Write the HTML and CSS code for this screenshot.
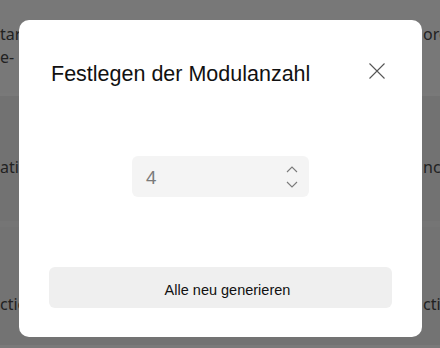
FILE: index.html
```html
<!DOCTYPE html>
<html lang="de">
<head>
<meta charset="utf-8">
<title>Festlegen der Modulanzahl</title>
<link rel="stylesheet" href="styles.css">
</head>
<body>
<div class="page">
  <div class="row row-1">
    <div class="cell-left">
      <div class="line">tar</div>
      <div class="line">e-</div>
    </div>
    <div class="cell-right">
      <div class="line">ore</div>
    </div>
  </div>
  <div class="row row-2">
    <div class="cell-left"><div class="line">atio</div></div>
    <div class="cell-right"><div class="line">nc</div></div>
  </div>
  <div class="row row-3">
    <div class="cell-left"><div class="line">ctio</div></div>
    <div class="cell-right"><div class="line">cti</div></div>
  </div>
</div>
<div class="overlay"></div>
<div class="dialog" role="dialog" aria-labelledby="dlg-title">
  <div class="dialog-header">
    <h1 class="dialog-title" id="dlg-title">Festlegen der Modulanzahl</h1>
    <button class="close-btn" aria-label="Schließen">
      <svg width="16" height="16" viewBox="0 0 16 16"><path d="M0.5 0.5 L15.5 15.5 M15.5 0.5 L0.5 15.5" stroke="#555" stroke-width="1.1" fill="none"/></svg>
    </button>
  </div>
  <div class="dialog-body">
    <div class="spin">
      <span class="spin-value">4</span>
      <span class="spin-arrows">
        <svg width="12" height="7" viewBox="0 0 12 7"><path d="M1 6 L6 1 L11 6" stroke="#7a7a7a" stroke-width="1.1" fill="none"/></svg>
        <svg width="12" height="7" viewBox="0 0 12 7"><path d="M1 1 L6 6 L11 1" stroke="#7a7a7a" stroke-width="1.1" fill="none"/></svg>
      </span>
    </div>
  </div>
  <button class="primary-btn">Alle neu generieren</button>
</div>
</body>
</html>
```

FILE: styles.css
```css
html, body {
  margin: 0;
  padding: 0;
  width: 440px;
  height: 348px;
  overflow: hidden;
  background: #ffffff;
}

.page {
  font-family: "Noto Sans", "Open Sans", sans-serif;
  font-size: 16px;
  color: #484848;
}

.row {
  display: grid;
  grid-template-columns: 423px 1fr;
  overflow: hidden;
  white-space: nowrap;
}

.row-1 {
  height: 96px;
  padding-top: 23px;
  box-sizing: border-box;
  background: #fafafa;
  border-bottom: 3px solid #fdfdfd;
}

.row-2 {
  height: 131px;
  padding-top: 60px;
  box-sizing: border-box;
  background: #efefef;
  border-bottom: 6px solid #f5f5f5;
}

.row-3 {
  height: 118px;
  padding-top: 66px;
  box-sizing: border-box;
  background: #f0f0f0;
}

.cell-left, .cell-right {
  overflow: hidden;
}

.cell-left {
  padding-left: 0;
}

.line {
  line-height: 23px;
}

.overlay {
  position: absolute;
  inset: 0;
  background: rgba(0, 0, 0, 0.52);
}

.dialog {
  position: absolute;
  left: 19px;
  top: 20px;
  width: 403px;
  height: 317px;
  box-sizing: border-box;
  background: #ffffff;
  border-radius: 10px;
  padding: 40px 30px 29px;
  display: flex;
  flex-direction: column;
  font-family: "Liberation Sans", Arial, sans-serif;
}

.dialog-header {
  display: flex;
  align-items: flex-start;
  justify-content: space-between;
  height: 28px;
}

.dialog-title {
  margin: 0 0 0 2px;
  font-size: 21.5px;
  font-weight: normal;
  line-height: 28px;
  color: #111111;
}

.close-btn {
  width: 24px;
  height: 24px;
  margin: -1px 3px 0 0;
  padding: 0;
  border: 0;
  background: transparent;
  display: flex;
  align-items: center;
  justify-content: center;
}

.dialog-body {
  flex: 1;
  display: flex;
  justify-content: center;
  padding-top: 68px;
}

.spin {
  width: 177px;
  height: 41px;
  box-sizing: border-box;
  background: #f4f4f4;
  border-radius: 6px;
  display: flex;
  align-items: center;
  justify-content: space-between;
  padding: 0 11px 0 14px;
}

.spin-value {
  font-family: "Noto Sans", "Open Sans", sans-serif;
  font-size: 18px;
  color: #7a7a7a;
  line-height: 24px;
}

.spin-arrows {
  display: flex;
  flex-direction: column;
  gap: 8px;
  margin-top: 1px;
}

.spin-arrows svg {
  display: block;
}

.primary-btn {
  height: 41px;
  width: 100%;
  border: 0;
  border-radius: 6px;
  background: #efefef;
  font-family: "Liberation Sans", Arial, sans-serif;
  font-size: 14.5px;
  color: #111111;
  padding: 5px 0 0 14px;
}
```
